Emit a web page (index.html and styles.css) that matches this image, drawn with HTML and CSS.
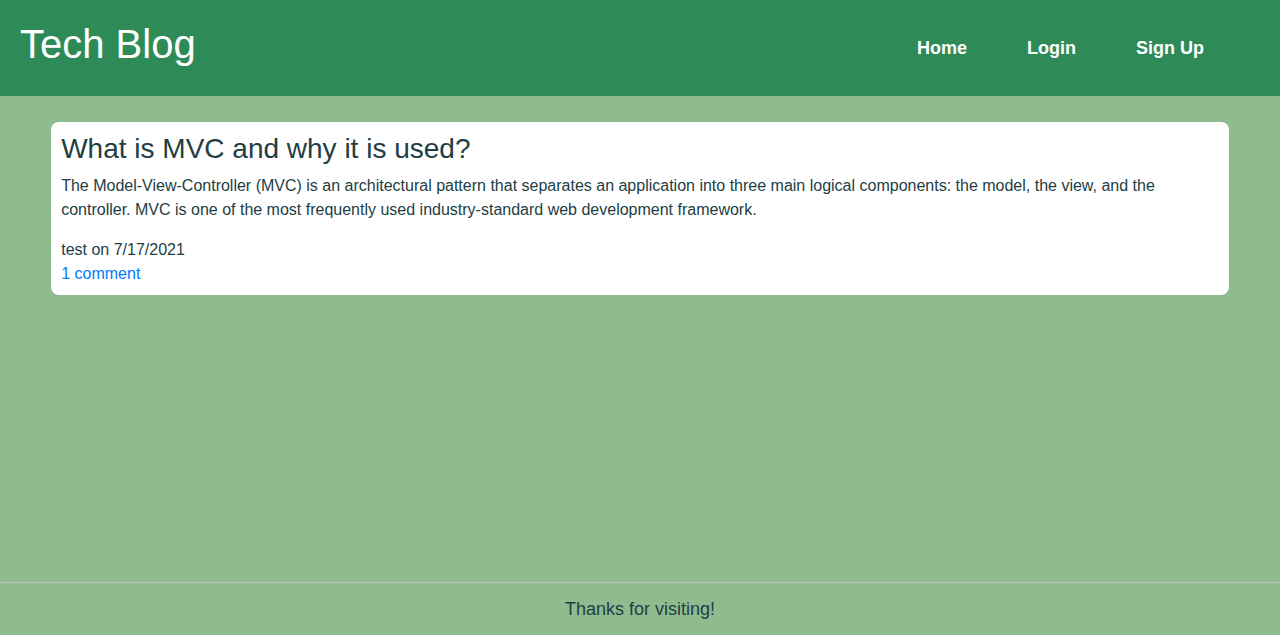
FILE: index.html
```html
<!DOCTYPE html>
<html lang="en">
<head>
<meta charset="utf-8">
<title>Tech Blog</title>
<link rel="stylesheet" href="styles.css">
</head>
<body>
<header class="site-header">
  <h1 class="site-title">Tech Blog</h1>
  <nav class="site-nav">
    <a class="nav-link" href="#">Home</a>
    <a class="nav-link" href="#">Login</a>
    <a class="nav-link" href="#">Sign Up</a>
  </nav>
</header>
<main class="content">
  <article class="post">
    <h2 class="post-title">What is MVC and why it is used?</h2>
    <p class="post-text">The Model-View-Controller (MVC) is an architectural pattern that separates an application into three main logical components: the model, the view, and the controller. MVC is one of the most frequently used industry-standard web development framework.</p>
    <div class="post-meta">test on 7/17/2021</div>
    <a class="post-comments" href="#">1 comment</a>
  </article>
</main>
<footer class="site-footer">Thanks for visiting!</footer>
</body>
</html>
```
FILE: styles.css
```css
* {
  box-sizing: border-box;
}

body {
  display: flex;
  flex-direction: column;
  min-height: 100vh;
  margin: 0;
  background: #8fbc8f;
  color: #223e43;
  font: 16px/24px "Liberation Sans", Arial, sans-serif;
}

.site-header {
  display: flex;
  justify-content: space-between;
  align-items: flex-start;
  padding: 20px;
  background: #2e8b57;
  color: #fff;
}

.site-title {
  margin: 0 0 8px;
  font-size: 40px;
  font-weight: 400;
  line-height: 48px;
}

.site-nav {
  display: flex;
  gap: 60px;
  padding: 14px 56px 0 0;
}

.nav-link {
  color: #fff;
  font-size: 18px;
  font-weight: 700;
  line-height: 28px;
  text-decoration: none;
}

.content {
  flex: 1;
  padding: 26px 4%;
}

.post {
  padding: 10px 10px 9px;
  border-radius: 8px;
  background: #fff;
}

.post-title {
  margin: 0 0 8px;
  font-size: 28px;
  font-weight: 400;
  line-height: 34px;
}

.post-text {
  margin: 0 0 16px;
}

.post-comments {
  color: #007bff;
  text-decoration: none;
}

.site-footer {
  padding: 12px 20px;
  border-top: 1px solid #c0c0c0;
  font-size: 18px;
  line-height: 28px;
  text-align: center;
}
```
